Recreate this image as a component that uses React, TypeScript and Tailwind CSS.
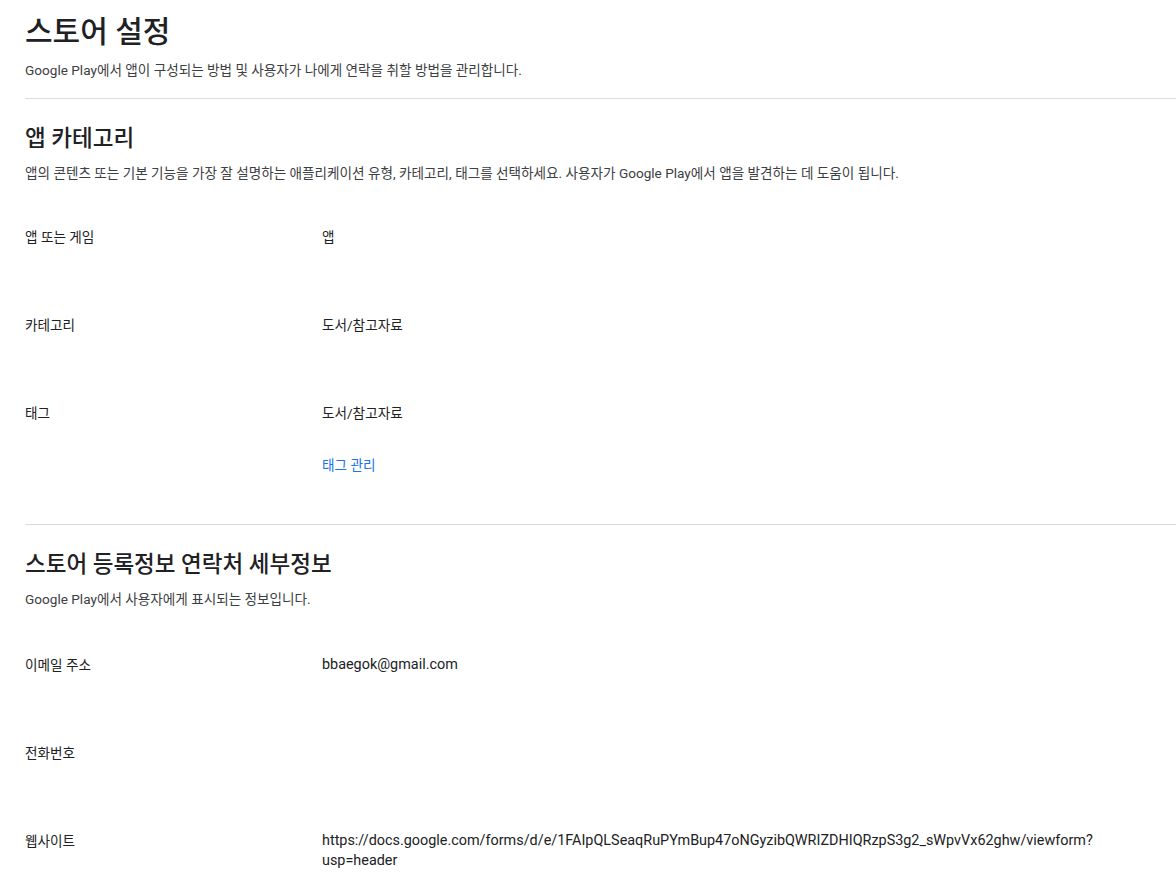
const font = { fontFamily: 'Roboto, "Noto Sans CJK KR", sans-serif' }

type Row = { label: string; value?: string; link?: string; latin?: boolean; wrap?: boolean }

const categoryRows: Row[] = [
  { label: '앱 또는 게임', value: '앱' },
  { label: '카테고리', value: '도서/참고자료' },
  { label: '태그', value: '도서/참고자료', link: '태그 관리' },
]

const contactRows: Row[] = [
  { label: '이메일 주소', value: 'bbaegok@gmail.com', latin: true },
  { label: '전화번호' },
  {
    label: '웹사이트',
    value: 'https://docs.google.com/forms/d/e/1FAIpQLSeaqRuPYmBup47oNGyzibQWRIZDHIQRzpS3g2_sWpvVx62ghw/viewform?usp=header',
    latin: true,
    wrap: true,
  },
]

export default function App() {
  return (
    <div className="min-h-[880px] bg-white pl-[25px] text-[#3c4043]" style={font}>
      {/* Page header */}
      <div className="pt-[12px] pb-[18px]">
        <h1 className="text-[30px] leading-[40px] font-medium text-[#202124]">스토어 설정</h1>
        <p className="mt-[8px] text-[13.6px] leading-5">
          Google Play에서 앱이 구성되는 방법 및 사용자가 나에게 연락을 취할 방법을 관리합니다.
        </p>
      </div>

      <div className="h-px bg-[#dadce0]" />

      <Section
        title="앱 카테고리"
        desc="앱의 콘텐츠 또는 기본 기능을 가장 잘 설명하는 애플리케이션 유형, 카테고리, 태그를 선택하세요. 사용자가 Google Play에서 앱을 발견하는 데 도움이 됩니다."
        rows={categoryRows}
      />

      <div className="h-px bg-[#dadce0]" />

      <Section
        title="스토어 등록정보 연락처 세부정보"
        desc="Google Play에서 사용자에게 표시되는 정보입니다."
        rows={contactRows}
        last
      />
    </div>
  )
}

function Section({ title, desc, rows, last }: { title: string; desc: string; rows: Row[]; last?: boolean }) {
  return (
    <div className="pt-[23px] pb-px">
      <h2 className="text-[22.5px] leading-8 font-medium text-[#202124]">{title}</h2>
      <p className="mt-[9px] text-[13.6px] leading-5">{desc}</p>
      <div className={`flex flex-col ${last ? 'mt-[46px]' : 'mt-[44px]'}`}>
        {rows.map(r => (
          <div key={r.label} className="flex min-h-[88px] pb-[48px]">
            <div className="w-[297px] shrink-0 text-[13.6px] leading-5 text-[#202124]">{r.label}</div>
            <div className="flex flex-col gap-[32px]">
              {r.value && (
                <div
                  className={`leading-5 text-[#202124] ${r.latin ? 'text-[14.4px]' : 'text-[13.6px]'} ${r.wrap ? 'w-[773px] break-words' : ''}`}
                >
                  {r.value}
                </div>
              )}
              {r.link && (
                <a href="#" className="text-[13.6px] leading-5 text-[#1a73e8]">{r.link}</a>
              )}
            </div>
          </div>
        ))}
      </div>
    </div>
  )
}
